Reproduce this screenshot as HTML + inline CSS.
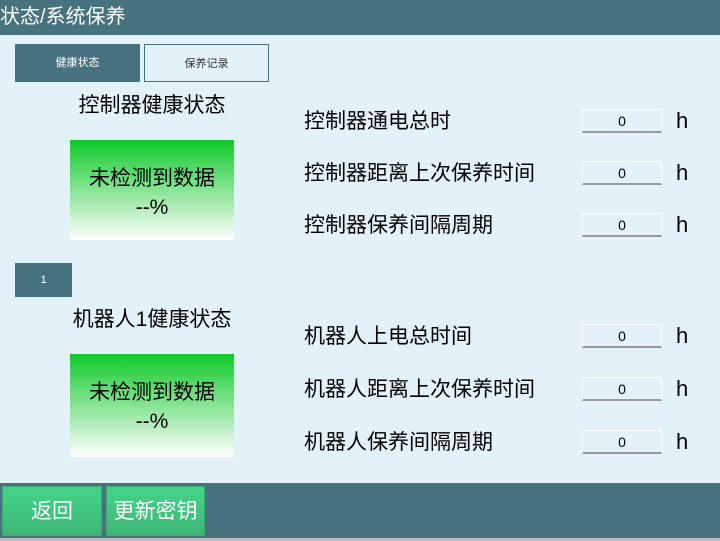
<!DOCTYPE html>
<html><head><meta charset="utf-8"><style>
*{margin:0;padding:0;box-sizing:border-box}
body{width:720px;height:541px;background:#e3f1f8;position:relative;overflow:hidden;font-family:"Liberation Sans","Noto Sans CJK SC",sans-serif;color:#000}
.a{position:absolute}
.hdr{left:0;top:0;width:720px;height:35px;background:#47737f;color:#fff;font-size:20px;line-height:35px;padding-left:0}
.tab{top:44px;height:38px;font-size:11px;line-height:38px;text-align:center}
.t1{left:15px;width:125px;background:#47737f;color:#fff}
.t2{left:144px;width:125px;border:1px solid #47737f;color:#333;background:#e3f1f8}
.title{font-size:21px;line-height:1;text-align:center;width:200px}
.g{width:164px;background:linear-gradient(#10c92a,#fff);text-align:center;font-size:21px;line-height:29px;padding-top:24px}
.lbl{left:304px;font-size:21px;line-height:1}
.box{left:582px;width:80px;height:24px;border:1px solid #fff;border-bottom:2px solid #999;background:#e3f1f8;text-align:center;font-size:14px;line-height:22px}
.h{left:676px;font-size:22px;line-height:1}
.bar{left:0;top:483px;width:720px;height:55px;background:#47737f}
.bt{top:486px;height:50px;background:linear-gradient(#45d488,#3db676);color:#fff;font-size:21px;text-align:center;line-height:50px;border:1px solid #3aa870}
</style></head><body>
<div class="a hdr">状态/系统保养</div>
<div class="a tab t1">健康状态</div>
<div class="a tab t2">保养记录</div>
<div class="a title" style="left:52px;top:95px">控制器健康状态</div>
<div class="a g" style="left:70px;top:140px;height:100px">未检测到数据<br>--%</div>
<div class="a" style="left:15px;top:263px;width:57px;height:34px;background:#47737f;color:#fff;font-size:11px;text-align:center;line-height:34px">1</div>
<div class="a title" style="left:52px;top:309px">机器人1健康状态</div>
<div class="a g" style="left:70px;top:354px;height:103px">未检测到数据<br>--%</div>

<div class="a lbl" style="top:111px">控制器通电总时</div>
<div class="a box" style="top:109px">0</div><div class="a h" style="top:110px">h</div>
<div class="a lbl" style="top:163px">控制器距离上次保养时间</div>
<div class="a box" style="top:161px">0</div><div class="a h" style="top:162px">h</div>
<div class="a lbl" style="top:215px">控制器保养间隔周期</div>
<div class="a box" style="top:213px">0</div><div class="a h" style="top:214px">h</div>

<div class="a lbl" style="top:326px">机器人上电总时间</div>
<div class="a box" style="top:324px">0</div><div class="a h" style="top:325px">h</div>
<div class="a lbl" style="top:379px">机器人距离上次保养时间</div>
<div class="a box" style="top:377px">0</div><div class="a h" style="top:378px">h</div>
<div class="a lbl" style="top:432px">机器人保养间隔周期</div>
<div class="a box" style="top:430px">0</div><div class="a h" style="top:431px">h</div>

<div class="a bar"></div>
<div class="a" style="left:0;top:538px;width:720px;height:3px;background:#bbb"></div>
<div class="a bt" style="left:2px;width:100px">返回</div>
<div class="a bt" style="left:106px;width:99px">更新密钥</div>
</body></html>
